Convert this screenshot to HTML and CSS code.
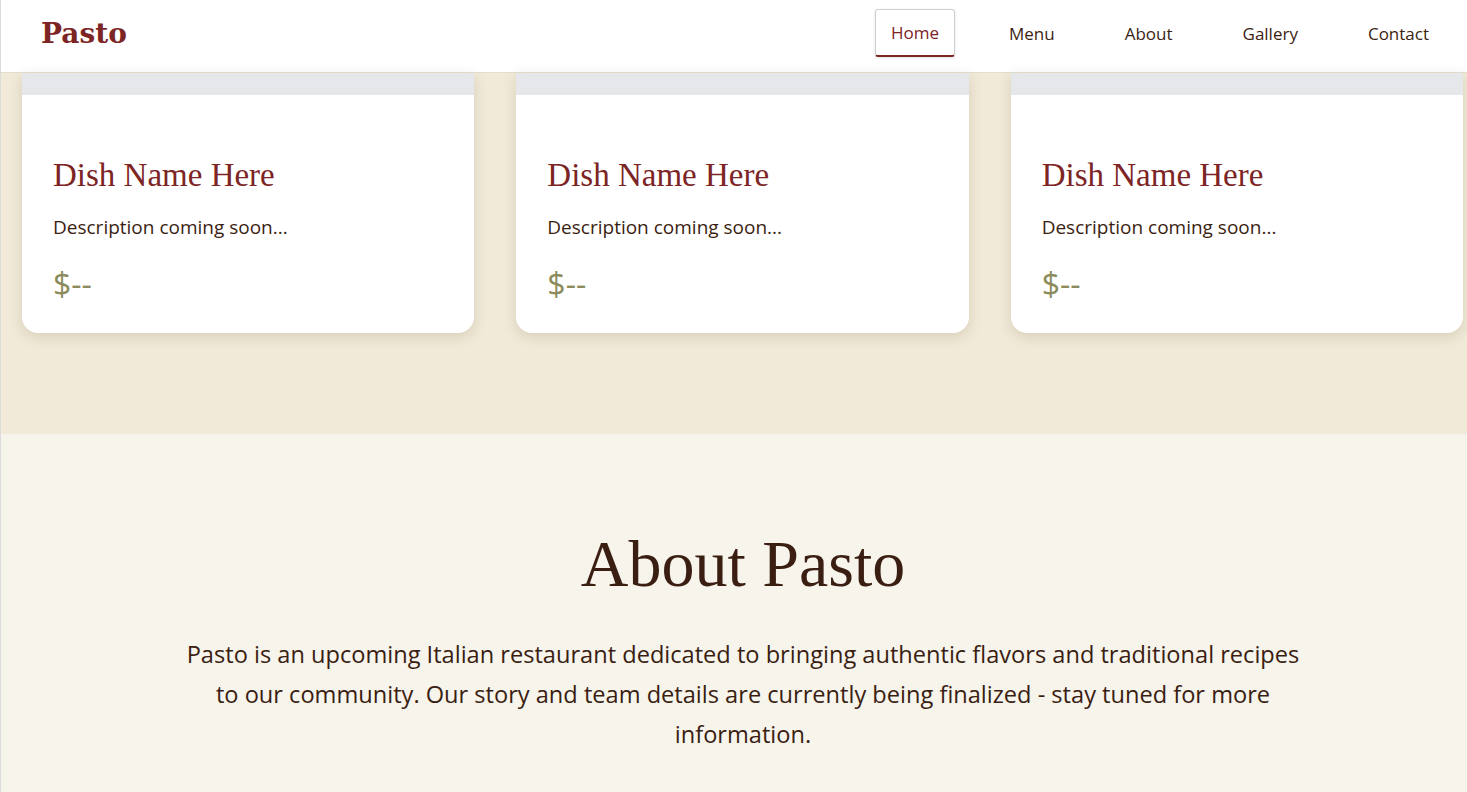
FILE: index.html
```html
<!DOCTYPE html>
<html lang="en">
<head>
<meta charset="utf-8">
<title>Pasto</title>
<link rel="stylesheet" href="styles.css">
</head>
<body>
<header class="site-header">
  <div class="logo">Pasto</div>
  <nav class="nav">
    <a class="nav-link active" href="#">Home</a>
    <a class="nav-link" href="#">Menu</a>
    <a class="nav-link" href="#">About</a>
    <a class="nav-link" href="#">Gallery</a>
    <a class="nav-link" href="#">Contact</a>
  </nav>
</header>
<main>
  <section class="menu-section">
    <div class="cards">
      <article class="card">
        <div class="card-img"></div>
        <div class="card-body">
          <h3 class="card-title">Dish Name Here</h3>
          <p class="card-desc">Description coming soon...</p>
          <p class="card-price">$--</p>
        </div>
      </article>
      <article class="card">
        <div class="card-img"></div>
        <div class="card-body">
          <h3 class="card-title">Dish Name Here</h3>
          <p class="card-desc">Description coming soon...</p>
          <p class="card-price">$--</p>
        </div>
      </article>
      <article class="card">
        <div class="card-img"></div>
        <div class="card-body">
          <h3 class="card-title">Dish Name Here</h3>
          <p class="card-desc">Description coming soon...</p>
          <p class="card-price">$--</p>
        </div>
      </article>
    </div>
  </section>
  <section class="about-section">
    <h2 class="about-title">About Pasto</h2>
    <p class="about-text">Pasto is an upcoming Italian restaurant dedicated to bringing authentic flavors and traditional recipes to our community. Our story and team details are currently being finalized - stay tuned for more information.</p>
  </section>
</main>
</body>
</html>
```

FILE: styles.css
```css
html, body {
  margin: 0;
  padding: 0;
}
body {
  font-family: "Open Sans", "Noto Sans", sans-serif;
  color: #3b1e12;
  background: #f7f4ec;
  border-left: 1px solid #dcdcdc;
  overflow: hidden;
  height: 792px;
}
.site-header {
  box-sizing: border-box;
  height: 73px;
  background: #fff;
  border-bottom: 1px solid #e4dfcd;
  display: flex;
  align-items: center;
  justify-content: space-between;
  padding: 0 22px 6px 40px;
}
.logo {
  font-family: "DejaVu Serif", serif;
  font-weight: bold;
  font-size: 28px;
  color: #7d2424;
}
.nav {
  display: flex;
  gap: 38px;
  align-items: center;
}
.nav-link {
  text-decoration: none;
  color: #3b1e12;
  font-size: 17px;
  padding: 11px 15px;
  border: 1px solid transparent;
  border-radius: 3px;
}
.nav-link.active {
  color: #7d2424;
  border-color: #cfcfcf;
  border-bottom: 2px solid #7d2424;
  box-shadow: 0 1px 3px rgba(0,0,0,0.12);
}
.menu-section {
  background: #f1ead8;
  padding: 0 4px 101px 21px;
}
.cards {
  display: grid;
  grid-template-columns: repeat(3, 1fr);
  gap: 42px;
}
.card {
  background: #fff;
  border-radius: 0 0 16px 16px;
  box-shadow: 0 4px 14px rgba(90, 70, 30, 0.16);
  overflow: hidden;
}
.card-img {
  height: 22px;
  background: #e5e7eb;
}
.card-body {
  padding: 61px 31px 28px;
}
.card-title {
  margin: 0;
  font-family: "Liberation Serif", serif;
  font-weight: normal;
  font-size: 33px;
  line-height: 1.2;
  color: #7d2424;
}
.card-desc {
  margin: 17px 0 0;
  font-size: 19px;
  line-height: 1.5;
  color: #3b1e12;
}
.card-price {
  margin: 22px 0 0;
  font-size: 32px;
  line-height: 1.3;
  color: #8b8b5c;
}
.about-section {
  padding: 90px 0 40px 18px;
  text-align: center;
}
.about-title {
  margin: 0;
  font-family: "Liberation Serif", serif;
  font-weight: normal;
  font-size: 66px;
  line-height: 1.2;
  color: #3b1e12;
}
.about-text {
  margin: 31px auto 0;
  max-width: 1130px;
  font-size: 23.6px;
  line-height: 40px;
  color: #3b1e12;
}
```
